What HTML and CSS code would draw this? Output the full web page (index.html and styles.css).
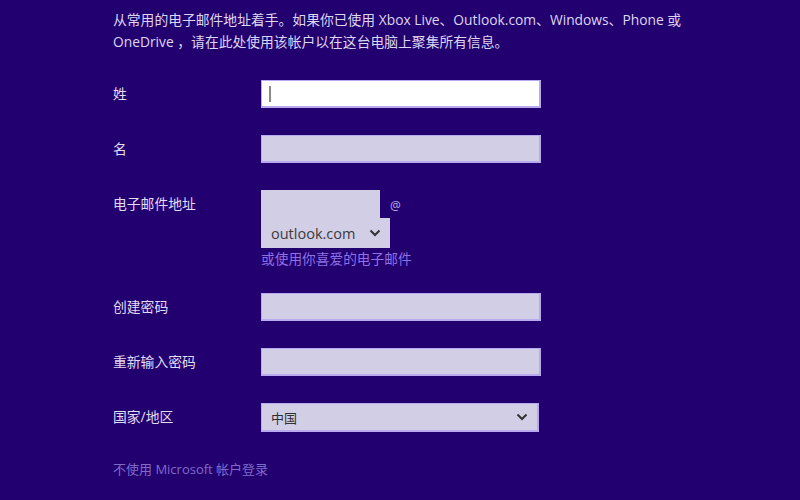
FILE: index.html
```html
<!DOCTYPE html>
<html lang="zh-CN">
<head>
<meta charset="utf-8">
<link rel="stylesheet" href="styles.css">
</head>
<body>
<div class="page">
  <p class="intro">从常用的电子邮件地址着手。如果你已使用 Xbox Live、Outlook.com、Windows、Phone 或<br>OneDrive ，请在此处使用该帐户以在这台电脑上聚集所有信息。</p>
  <div class="form">
    <div class="row">
      <div class="label">姓</div>
      <div class="field active"><span class="caret"></span></div>
    </div>
    <div class="row">
      <div class="label">名</div>
      <div class="field"></div>
    </div>
    <div class="row email-row">
      <div class="label">电子邮件地址</div>
      <div class="email">
        <div class="email-top">
          <div class="email-box"></div>
          <span class="at">@</span>
        </div>
        <div class="domain">
          <span>outlook.com</span>
          <svg class="chev" width="12" height="8" viewBox="0 0 12 8"><path d="M1.5 1.5 L6 6 L10.5 1.5" fill="none" stroke="#333" stroke-width="2"/></svg>
        </div>
        <a class="alt">或使用你喜爱的电子邮件</a>
      </div>
    </div>
    <div class="row">
      <div class="label">创建密码</div>
      <div class="field"></div>
    </div>
    <div class="row">
      <div class="label">重新输入密码</div>
      <div class="field"></div>
    </div>
    <div class="row">
      <div class="label">国家/地区</div>
      <div class="field select">
        <span>中国</span>
        <svg class="chev" width="12" height="8" viewBox="0 0 12 8"><path d="M1.5 1.5 L6 6 L10.5 1.5" fill="none" stroke="#333" stroke-width="2"/></svg>
      </div>
    </div>
  </div>
  <a class="footer">不使用 Microsoft 帐户登录</a>
</div>
</body>
</html>
```
FILE: styles.css
```css
html, body {
  margin: 0;
  padding: 0;
  background: #230070;
  width: 800px;
  height: 500px;
  overflow: hidden;
}
.page {
  padding: 9px 0 0 113px;
  font-family: "Open Sans", "Noto Sans CJK SC", sans-serif;
  color: #ddd8f2;
}
.intro {
  margin: 0;
  font-size: 13.8px;
  line-height: 22px;
  color: #dcd7f0;
  white-space: nowrap;
}
.form {
  display: flex;
  flex-direction: column;
  gap: 27px;
  margin-top: 27px;
}
.row {
  display: flex;
  align-items: flex-start;
}
.email-row {
  margin-bottom: -2px;
}
.label {
  width: 148px;
  flex: none;
  font-size: 13.8px;
  line-height: 28px;
  color: #e0dcf2;
}
.field {
  width: 277px;
  height: 25px;
  background: #d2cee6;
  border-style: solid;
  border-color: #b9a9ee;
  border-width: 1px 2px 2px 1px;
  box-sizing: content-box;
  display: flex;
  align-items: center;
}
.field.active {
  background: #fff;
}
.caret {
  width: 2px;
  height: 16px;
  background: #8a8a8a;
  margin-left: 7px;
}
.email {
  display: flex;
  flex-direction: column;
}
.email-top {
  display: flex;
  align-items: flex-start;
}
.email-box {
  width: 119px;
  height: 28px;
  background: #d2cee6;
}
.at {
  margin: 7px 0 0 10px;
  font-size: 12px;
  color: #b8aee0;
}
.domain {
  width: 129px;
  height: 30px;
  background: #d2cee6;
  display: flex;
  align-items: center;
  justify-content: space-between;
  box-sizing: border-box;
  padding: 0 9px 0 10px;
  font-size: 14.5px;
  color: #3a3a3a;
}
.alt {
  margin-top: 2px;
  font-size: 13.7px;
  line-height: 18px;
  color: #8e72e4;
}
.select {
  width: 266px;
  height: 26px;
  justify-content: space-between;
  padding-left: 9px;
  font-size: 13px;
  color: #2f2f2f;
}
.select .chev {
  margin-right: 9px;
}
.footer {
  display: block;
  margin-top: 28px;
  font-size: 13px;
  line-height: 18px;
  color: #7f6cc8;
}
```
